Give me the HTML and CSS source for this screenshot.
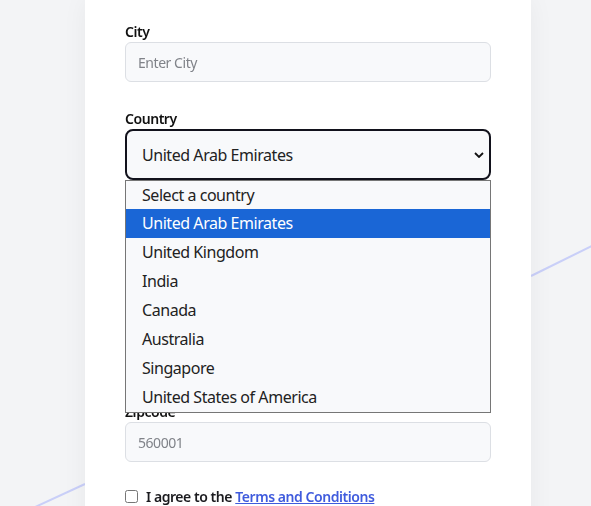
FILE: index.html
```html
<!DOCTYPE html>
<html lang="en">
  <head>
    <meta charset="UTF-8" />
    <meta name="viewport" content="width=device-width, initial-scale=1.0" />
    <title>Shipping address</title>
    <link rel="stylesheet" href="styles.css">
  </head>
  <body>
    <svg class="backdrop" viewBox="0 0 591 506" preserveAspectRatio="none">
      <line x1="531" y1="276" x2="640" y2="222" />
      <line x1="20" y1="514" x2="85" y2="484" />
    </svg>

    <div class="card">
      <div class="field">
        <label for="city">City</label>
        <input type="text" id="city" class="input" placeholder="Enter City" />
      </div>

      <div class="field">
        <label for="country">Country</label>
        <div class="picker">
          <div class="select" id="country">
            <span>United Arab Emirates</span>
            <svg class="chevron" viewBox="0 0 10 6" width="10" height="6">
              <path d="M1 1l4 4 4-4" />
            </svg>
          </div>
          <ul class="options">
            <li>Select a country</li>
            <li class="active">United Arab Emirates</li>
            <li>United Kingdom</li>
            <li>India</li>
            <li>Canada</li>
            <li>Australia</li>
            <li>Singapore</li>
            <li>United States of America</li>
          </ul>
        </div>
      </div>

      <div class="field">
        <label for="state">State</label>
        <input type="text" id="state" class="input tall" placeholder="Enter State" />
      </div>

      <div class="field">
        <label for="street">Street</label>
        <input type="text" id="street" class="input tall" placeholder="Enter Street" />
      </div>

      <div class="field">
        <label for="zip">Zipcode</label>
        <input type="text" id="zip" class="input" placeholder="560001" />
      </div>

      <div class="agree">
        <input type="checkbox" id="terms" />
        <label for="terms">I agree to the <a href="#">Terms and Conditions</a></label>
      </div>
    </div>
  </body>
</html>
```

FILE: styles.css
```css
* {
  margin: 0;
  padding: 0;
  box-sizing: border-box;
}
body {
  font-family: "Noto Sans", Arial, sans-serif;
  letter-spacing: -0.45px;
  background: #f3f4f6;
  color: #1b1b1f;
  overflow: hidden;
}

.backdrop {
  position: fixed;
  top: 0;
  left: 0;
  width: 100%;
  height: 100%;
  z-index: 0;
}
.backdrop line {
  stroke: #c9cff8;
  stroke-width: 2;
}

.card {
  position: relative;
  z-index: 1;
  width: 446px;
  margin-left: 85px;
  padding: 25px 40px 40px;
  background: #fff;
  box-shadow: 0 0 24px rgba(0, 0, 0, 0.05);
}

.field {
  display: flex;
  flex-direction: column;
  gap: 3px;
  margin-bottom: 30px;
}
.field label {
  font-size: 14px;
  font-weight: 600;
  line-height: 14px;
  color: #111;
}

.input {
  height: 40px;
  padding: 0 12px;
  border: 1px solid #dcdfe4;
  border-radius: 6px;
  background: #f8f9fb;
  font-family: inherit;
  letter-spacing: inherit;
  font-size: 14px;
  color: #222;
}
.input::placeholder {
  color: #808389;
}
.input.tall {
  height: 50px;
}
#street {
  height: 51px;
}

.picker {
  position: relative;
}
.select {
  display: flex;
  align-items: center;
  justify-content: space-between;
  height: 51px;
  padding: 0 5px 0 15px;
  border: 2px solid #12121c;
  border-radius: 8px;
  background: #f8f9fb;
  font-size: 16px;
  color: #222;
}
.chevron {
  fill: none;
  stroke: #111;
  stroke-width: 1.8;
}

.options {
  position: absolute;
  top: 100%;
  left: 0;
  right: 0;
  z-index: 5;
  list-style: none;
  border: 1px solid #767676;
  background: #f8f9fb;
}
.options li {
  height: 29px;
  line-height: 29px;
  padding-left: 16px;
  font-size: 16px;
  color: #222;
}
.options li:first-child {
  height: 28px;
  line-height: 28px;
}
.options li.active {
  background: #1a66d6;
  color: #fff;
}

.agree {
  display: flex;
  align-items: center;
  gap: 8px;
  margin-top: -5px;
  font-size: 14px;
  font-weight: 600;
}
.agree input {
  width: 13px;
  height: 13px;
}
.agree a {
  color: #3f5bdd;
}
```
